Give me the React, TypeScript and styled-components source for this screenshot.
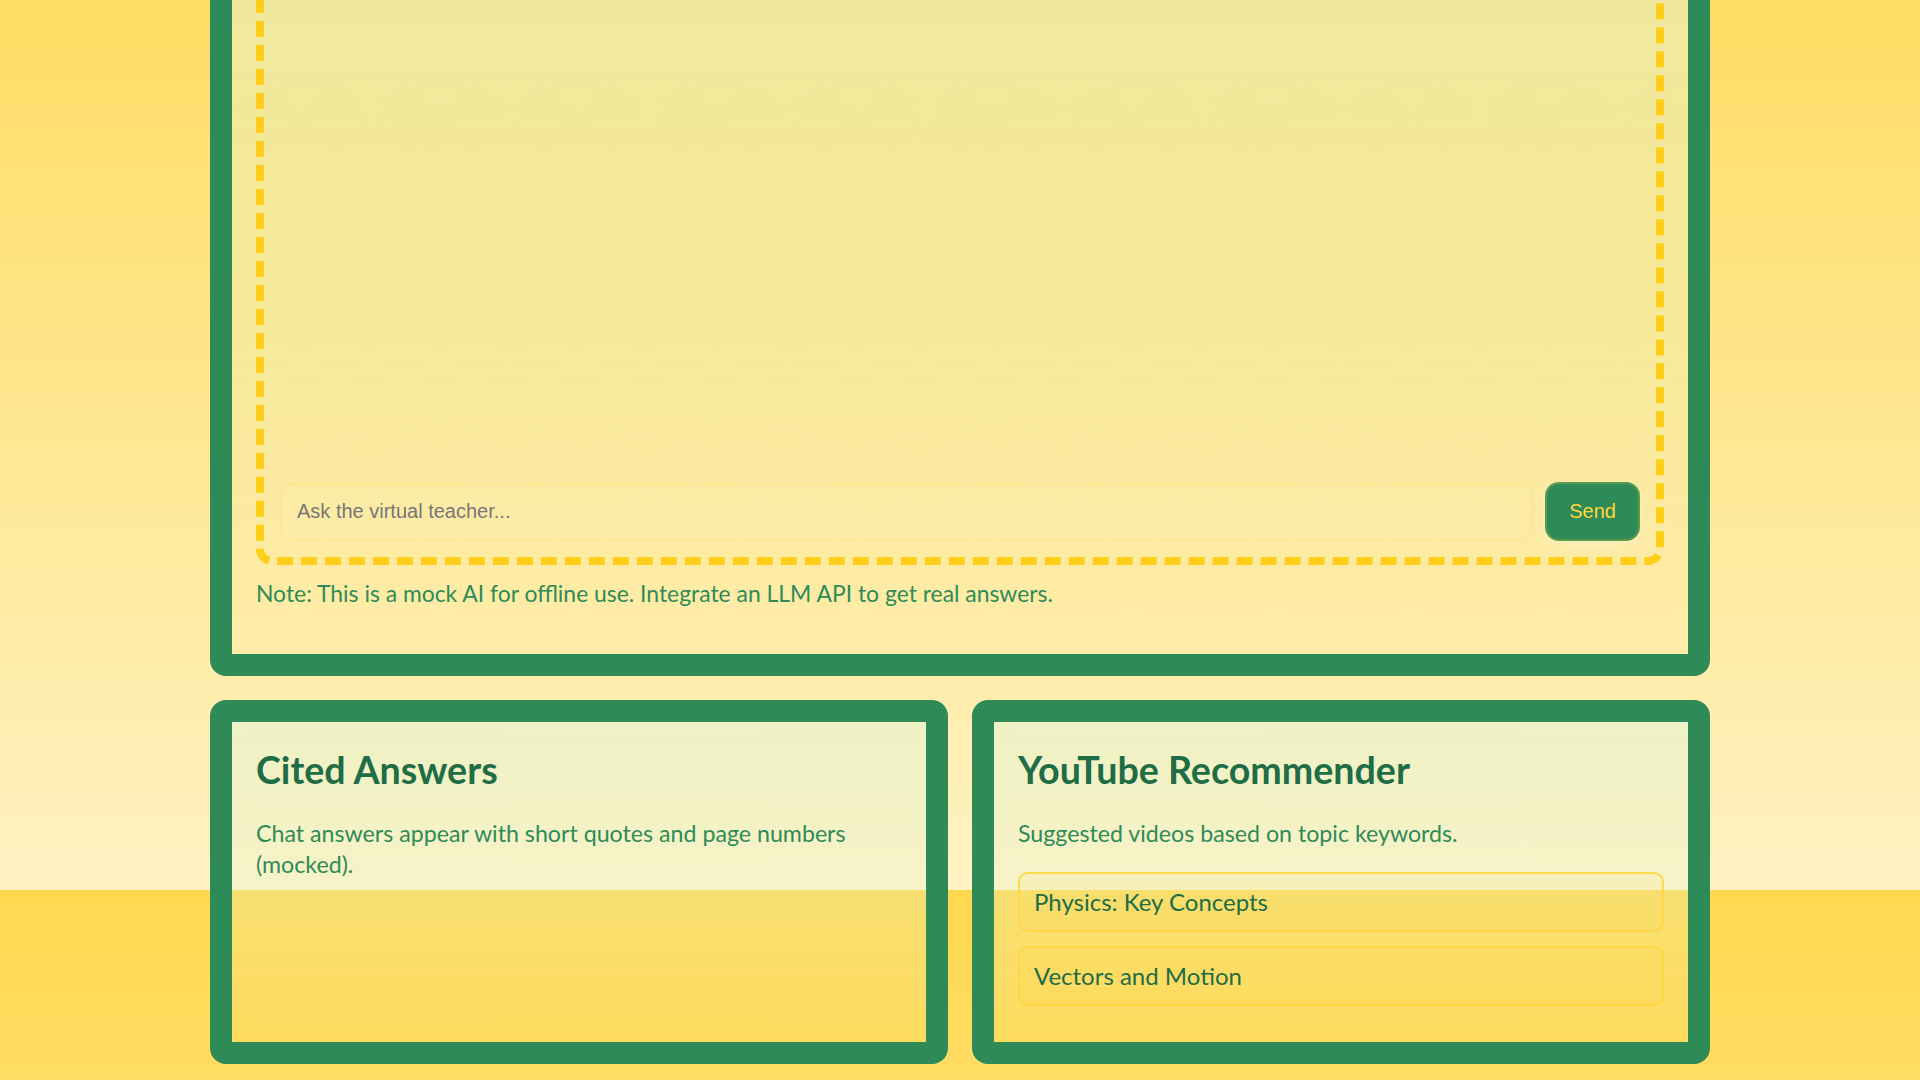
import React, { useLayoutEffect, useEffect } from "react";
import styled, { createGlobalStyle } from "styled-components";

const GlobalStyle = createGlobalStyle`
  html {
    height: 100%;
  }
  body {
    margin: 0;
    background: linear-gradient(180deg, #ffd84f 0%, #fff2c3 100%);
    font-family: Lato, "Noto Sans", sans-serif;
    color: #2e8b57;
  }
  *, *::before, *::after {
    box-sizing: border-box;
  }
`;

const Page = styled.main`
  max-width: 1500px;
  margin: 0 auto;
  padding: 16px 0;
  display: flex;
  flex-direction: column;
  gap: 24px;
`;

const Card = styled.section<{ $fade: number }>`
  border: 22px solid #2e8b57;
  border-radius: 16px;
  padding: 24px;
  display: flex;
  flex-direction: column;
  background: linear-gradient(
    to top,
    rgba(225, 245, 215, 0) 0px,
    rgba(225, 245, 215, 0.55) ${(p) => p.$fade}px
  );
`;

const CardRow = styled.div`
  display: grid;
  grid-template-columns: 1fr 1fr;
  gap: 24px;
`;

const CardTitle = styled.h2`
  margin: 0 0 24px;
  font-family: Lato, "Noto Sans", sans-serif;
  font-weight: 700;
  font-size: 37.6px;
  line-height: 48px;
  color: #1f6d46;
`;

const CardText = styled.p`
  margin: 0;
  font-size: 23.2px;
  line-height: 30.6px;
  color: #2e8b57;
`;

const ChatBox = styled.div`
  border: 8px dashed #ffce1b;
  border-radius: 16px;
  padding: 16px;
  display: flex;
  flex-direction: column;
  gap: 16px;
`;

const Messages = styled.div`
  min-height: 2730px;
`;

const InputRow = styled.form`
  display: flex;
  align-items: center;
  gap: 12px;
`;

const ChatInput = styled.input`
  flex: 1;
  min-width: 0;
  font-family: "Liberation Sans", Arial, sans-serif;
  font-size: 20px;
  padding: 16px;
  border: 1px solid rgba(255, 214, 60, 0.3);
  border-radius: 14px;
  background: rgba(255, 255, 255, 0.05);
  color: #1f6d46;
  outline: none;

  &::placeholder {
    color: #777777;
  }
`;

const SendButton = styled.button`
  font-family: "Liberation Sans", Arial, sans-serif;
  font-size: 20px;
  padding: 16px 22px;
  color: #ffd43b;
  background: #2e8b57;
  border: 2px solid rgba(255, 212, 59, 0.22);
  border-radius: 14px;
  box-shadow: 0 4px 14px rgba(255, 245, 215, 0.55);
  cursor: pointer;
`;

const Note = styled.p`
  margin: 12px 0 20px;
  font-size: 22.9px;
  line-height: 33.3px;
  color: #2e8b57;
`;

const VideoList = styled.ul`
  list-style: none;
  margin: 23px 0 12px;
  padding: 0;
  display: flex;
  flex-direction: column;
  gap: 14px;
`;

const VideoItem = styled.li`
  padding: 13px 14px;
  border: 2px solid rgba(255, 214, 64, 0.9);
  border-radius: 10px;
  background: rgba(255, 215, 64, 0.1);
  font-size: 24px;
  line-height: 30px;
  color: #1f6d46;
`;

const videos = ["Physics: Key Concepts", "Vectors and Motion"];

export default function App() {
  const scrollToEnd = () => {
    window.scrollTo(0, document.documentElement.scrollHeight);
  };

  useLayoutEffect(() => {
    scrollToEnd();
  }, []);

  useEffect(() => {
    scrollToEnd();
    const id = requestAnimationFrame(scrollToEnd);
    const t = setTimeout(scrollToEnd, 50);
    return () => {
      cancelAnimationFrame(id);
      clearTimeout(t);
    };
  }, []);

  return (
    <>
      <GlobalStyle />
      <Page>
        <Card $fade={720}>
          <ChatBox>
            <Messages />
            <InputRow onSubmit={(e) => e.preventDefault()}>
              <ChatInput placeholder="Ask the virtual teacher..." />
              <SendButton type="submit">Send</SendButton>
            </InputRow>
          </ChatBox>
          <Note>
            Note: This is a mock AI for offline use. Integrate an LLM API to get
            real answers.
          </Note>
        </Card>
        <CardRow>
          <Card $fade={320}>
            <CardTitle>Cited Answers</CardTitle>
            <CardText>
              Chat answers appear with short quotes and page numbers (mocked).
            </CardText>
          </Card>
          <Card $fade={320}>
            <CardTitle>YouTube Recommender</CardTitle>
            <CardText>Suggested videos based on topic keywords.</CardText>
            <VideoList>
              {videos.map((v) => (
                <VideoItem key={v}>{v}</VideoItem>
              ))}
            </VideoList>
          </Card>
        </CardRow>
      </Page>
    </>
  );
}
